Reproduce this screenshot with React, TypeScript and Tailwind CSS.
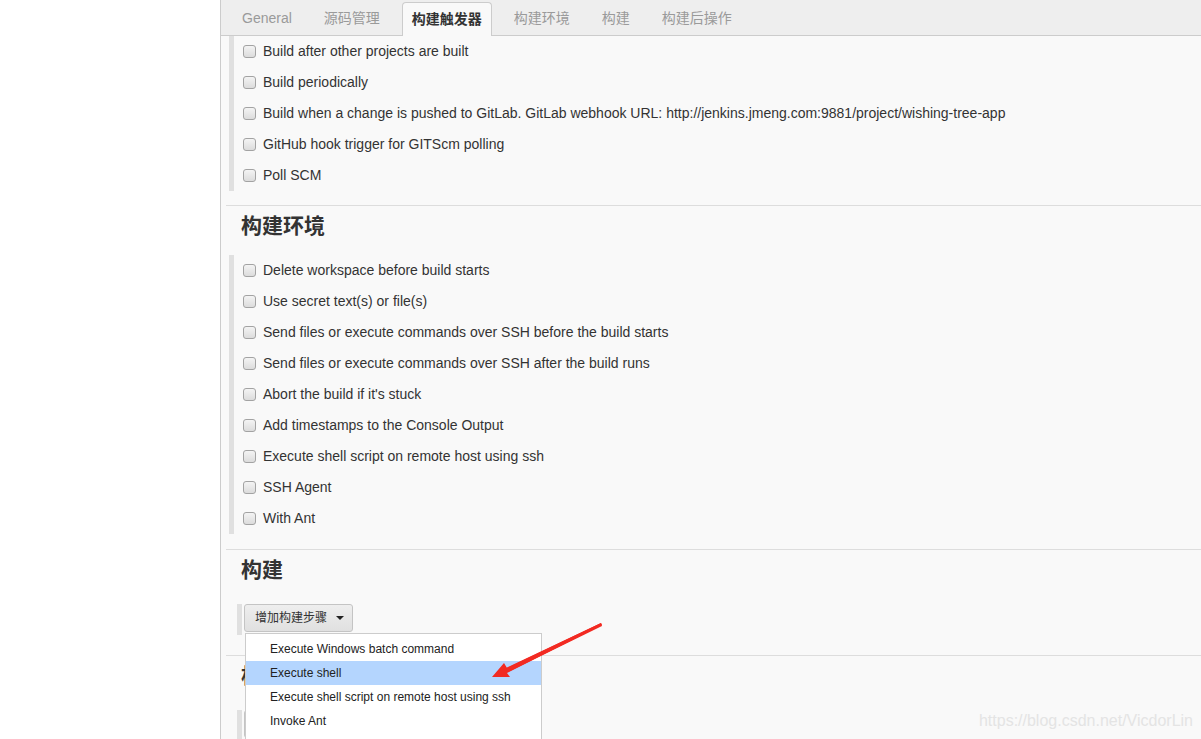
import React from "react";

const FONT = "font-['Liberation_Sans','Noto_Sans_CJK_SC',sans-serif]";

function Checkbox() {
  return (
    <span className="block w-[13px] h-[13px] shrink-0 rounded-[3px] border border-[#a3a3a3] bg-gradient-to-b from-[#f4f4f4] to-[#dcdcdc]" />
  );
}

function CheckRow({ label }: { label: string }) {
  return (
    <div className="flex items-center h-[31px] pl-[9px] gap-[7px] text-[14px] text-[#333]">
      <Checkbox />
      <span className="whitespace-nowrap">{label}</span>
    </div>
  );
}

function Bar({ children }: { children: React.ReactNode }) {
  return (
    <div className="ml-[3px] border-l-[5px] border-[#e0e0e0]">{children}</div>
  );
}

function Heading({ children }: { children: React.ReactNode }) {
  return (
    <div className="pl-[15px] pt-[6px] h-[34px] leading-[28px] text-[21px] font-bold text-[#333]">
      {children}
    </div>
  );
}

const tabs = ["General", "源码管理", "构建触发器", "构建环境", "构建", "构建后操作"];

const trig = [
  "Build after other projects are built",
  "Build periodically",
  "Build when a change is pushed to GitLab. GitLab webhook URL: http://jenkins.jmeng.com:9881/project/wishing-tree-app",
  "GitHub hook trigger for GITScm polling",
  "Poll SCM",
];

const env = [
  "Delete workspace before build starts",
  "Use secret text(s) or file(s)",
  "Send files or execute commands over SSH before the build starts",
  "Send files or execute commands over SSH after the build runs",
  "Abort the build if it's stuck",
  "Add timestamps to the Console Output",
  "Execute shell script on remote host using ssh",
  "SSH Agent",
  "With Ant",
];

const menu = [
  "Execute Windows batch command",
  "Execute shell",
  "Execute shell script on remote host using ssh",
  "Invoke Ant",
];

export default function App() {
  return (
    <div className={`relative flex w-[1201px] h-[739px] overflow-hidden bg-white ${FONT}`}>
      <div className="w-[220px] shrink-0 bg-white" />
      <div className="flex-1 flex flex-col border-l border-[#cccccc] bg-[#f9f9f9]">
        {/* tab bar */}
        <div className="h-[36px] shrink-0 flex items-end gap-[12px] pl-[11px] bg-[#eeeeee] border-b border-[#cccccc]">
          {tabs.map((t) =>
            t === "构建触发器" ? (
              <div
                key={t}
                className="h-[34px] -mb-px px-[9px] flex items-center border border-b-0 border-[#cccccc] rounded-t-[4px] bg-[#f9f9f9] text-[14px] font-bold text-[#333]"
              >
                {t}
              </div>
            ) : (
              <div key={t} className="h-[34px] px-[10px] flex items-center text-[14px] text-[#9a9a9a]">
                {t}
              </div>
            )
          )}
        </div>

        <div className="ml-[5px] flex flex-col">
          {/* triggers */}
          <div className="pb-[14px] border-b border-[#dddddd]">
            <Bar>
              {trig.map((l) => (
                <CheckRow key={l} label={l} />
              ))}
            </Bar>
          </div>

          {/* env */}
          <div className="pb-[15px] border-b border-[#dddddd]">
            <Heading>构建环境</Heading>
            <div className="mt-[15px]">
              <Bar>
                {env.map((l) => (
                  <CheckRow key={l} label={l} />
                ))}
              </Bar>
            </div>
          </div>

          {/* build */}
          <div className="pb-[20px] border-b border-[#dddddd]">
            <Heading>构建</Heading>
            <div className="mt-[20px] ml-[11px] h-[31px] border-l-[5px] border-[#e0e0e0] pl-[2px]">
              <div className="relative w-[109px]">
                <div className="h-[28px] flex items-center gap-[9px] px-[10px] rounded-[3px] border border-[#c4c4c4] bg-gradient-to-b from-[#eeeeee] to-[#e0e0e0] text-[12px] text-[#333]">
                  <span className="whitespace-nowrap">增加构建步骤</span>
                  <span className="block w-0 h-0 border-x-[4px] border-x-transparent border-t-[4px] border-t-[#222]" />
                </div>
                <div className="absolute left-[1px] top-[29px] z-10 w-[297px] h-[140px] pt-[3px] bg-white border border-[#cccccc]">
                  {menu.map((m) => (
                    <div
                      key={m}
                      className={`h-[24px] flex items-center pl-[24px] text-[12px] text-[#222] whitespace-nowrap ${
                        m === "Execute shell" ? "bg-[#b4d5fe]" : ""
                      }`}
                    >
                      {m}
                    </div>
                  ))}
                </div>
              </div>
            </div>
          </div>

          {/* post build */}
          <div>
            <Heading>构建后操作</Heading>
            <div className="mt-[20px] ml-[11px] h-[60px] border-l-[5px] border-[#e0e0e0] pl-[2px]">
              <div className="w-[109px] h-[28px] rounded-[3px] border border-[#c4c4c4] bg-[#e6e6e6]" />
            </div>
          </div>
        </div>
      </div>

      {/* annotation arrow */}
      <svg
        className="absolute left-[488px] top-[622px] z-20"
        width="118"
        height="60"
        viewBox="0 0 118 60"
      >
        <polygon
          points="114,3 113,1 19,46 16,41 4,55 22,55 19,51"
          fill="#f22a22"
        />
        <polygon points="113,1 114,4 20,50 18,46" fill="#f22a22" />
      </svg>

      {/* watermark */}
      <div className="absolute right-[8px] bottom-[6px] text-[16px] text-[#e4e4e4] whitespace-nowrap">
        https://blog.csdn.net/VicdorLin
      </div>
    </div>
  );
}
